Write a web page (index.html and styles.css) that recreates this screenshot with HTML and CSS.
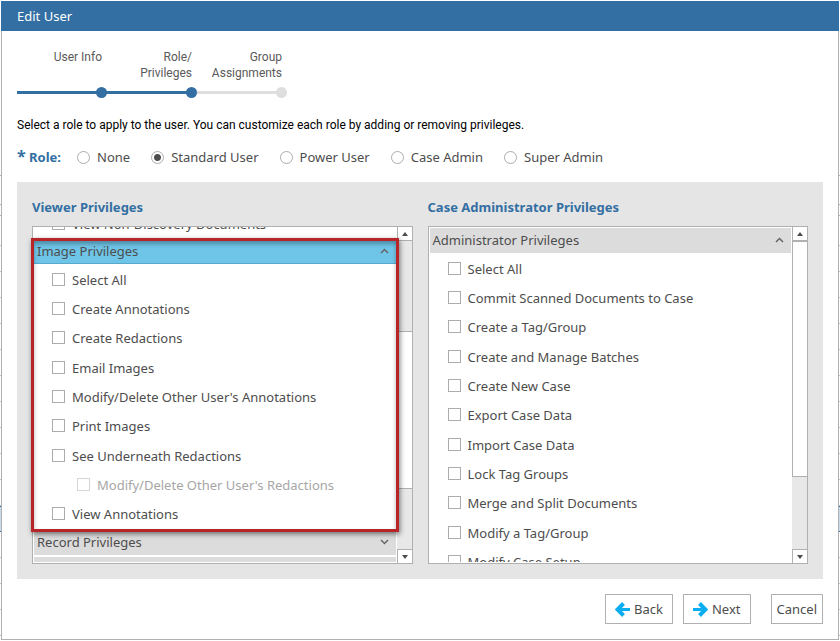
FILE: index.html
```html
<!DOCTYPE html>
<html lang="en">
<head>
<meta charset="utf-8">
<title>Edit User</title>
<link rel="stylesheet" href="styles.css">
</head>
<body>
<form class="window">
  <h1 class="titlebar">Edit User</h1>
  <main class="content">
    <ol class="steps">
      <li class="step done">User Info</li>
      <li class="step done">Role/<br>Privileges</li>
      <li class="step">Group<br>Assignments</li>
    </ol>
    <p class="intro">Select a role to apply to the user. You can customize each role by adding or removing privileges.</p>
    <div class="roles" role="radiogroup" aria-labelledby="role-title">
      <span class="roles-title" id="role-title"><span class="star">*</span> Role:</span>
      <label class="role"><input type="radio" name="role">None</label>
      <label class="role"><input type="radio" name="role" checked>Standard User</label>
      <label class="role"><input type="radio" name="role">Power User</label>
      <label class="role"><input type="radio" name="role">Case Admin</label>
      <label class="role"><input type="radio" name="role">Super Admin</label>
    </div>
    <div class="panel">
      <section class="column">
        <h2>Viewer Privileges</h2>
        <div class="listbox">
          <div class="view scrolled">
            <ul class="privileges">
              <li><label><input type="checkbox">View Non-Discovery Documents</label></li>
            </ul>
            <button type="button" class="group active">Image Privileges<svg class="chevron" viewBox="0 0 9 6"><path d="M1 5 4.500 1.500 8 5"/></svg></button>
            <ul class="privileges">
              <li><label><input type="checkbox">Select All</label></li>
              <li><label><input type="checkbox">Create Annotations</label></li>
              <li><label><input type="checkbox">Create Redactions</label></li>
              <li><label><input type="checkbox">Email Images</label></li>
              <li><label><input type="checkbox">Modify/Delete Other User's Annotations</label></li>
              <li><label><input type="checkbox">Print Images</label></li>
              <li><label><input type="checkbox">See Underneath Redactions</label></li>
              <li class="nested"><label><input type="checkbox" disabled>Modify/Delete Other User's Redactions</label></li>
              <li><label><input type="checkbox">View Annotations</label></li>
            </ul>
            <button type="button" class="group">Record Privileges<svg class="chevron" viewBox="0 0 9 6"><path d="M1 1 4.500 4.500 8 1"/></svg></button>
            <div class="group"></div>
          </div>
          <div class="scrollbar">
            <button type="button" class="arrow" aria-label="Scroll up"><svg viewBox="0 0 6 4"><path d="M3 0 6 4H0z"/></svg></button>
            <div class="track middle"><div class="thumb"></div></div>
            <button type="button" class="arrow down" aria-label="Scroll down"><svg viewBox="0 0 6 4"><path d="M0 0H6L3 4z"/></svg></button>
          </div>
          <div class="callout"></div>
        </div>
      </section>
      <section class="column">
        <h2>Case Administrator Privileges</h2>
        <div class="listbox">
          <div class="view">
            <button type="button" class="group">Administrator Privileges<svg class="chevron" viewBox="0 0 9 6"><path d="M1 5 4.500 1.500 8 5"/></svg></button>
            <ul class="privileges">
              <li><label><input type="checkbox">Select All</label></li>
              <li><label><input type="checkbox">Commit Scanned Documents to Case</label></li>
              <li><label><input type="checkbox">Create a Tag/Group</label></li>
              <li><label><input type="checkbox">Create and Manage Batches</label></li>
              <li><label><input type="checkbox">Create New Case</label></li>
              <li><label><input type="checkbox">Export Case Data</label></li>
              <li><label><input type="checkbox">Import Case Data</label></li>
              <li><label><input type="checkbox">Lock Tag Groups</label></li>
              <li><label><input type="checkbox">Merge and Split Documents</label></li>
              <li><label><input type="checkbox">Modify a Tag/Group</label></li>
              <li><label><input type="checkbox">Modify Case Setup</label></li>
            </ul>
          </div>
          <div class="scrollbar">
            <button type="button" class="arrow" aria-label="Scroll up"><svg viewBox="0 0 6 4"><path d="M3 0 6 4H0z"/></svg></button>
            <div class="track top"><div class="thumb"></div></div>
            <button type="button" class="arrow down" aria-label="Scroll down"><svg viewBox="0 0 6 4"><path d="M0 0H6L3 4z"/></svg></button>
          </div>
        </div>
      </section>
    </div>
    <footer class="actions">
      <button type="button"><svg class="icon" viewBox="0 0 15 15"><path class="head" d="M8.500 1.500 2.500 7.500l6 6"/><path class="shaft" d="M3 7.500H15"/></svg>Back</button>
      <button type="button"><svg class="icon" viewBox="0 0 15 15"><path class="head" d="M6.500 1.500 12.500 7.500l-6 6"/><path class="shaft" d="M12 7.500H0"/></svg>Next</button>
      <button type="button" class="cancel">Cancel</button>
    </footer>
  </main>
</form>
</body>
</html>
```
FILE: styles.css
```css
* { box-sizing: border-box; }

body {
  margin: 0;
  height: 100vh;
  padding: 1px;
  overflow: hidden;
  font-family: "Noto Sans", "Open Sans", sans-serif;
  font-size: 13px;
  line-height: 18px;
  color: #4d4d4d;
  /* toolbar, selected row and rows of the grid that lies behind the dialog */
  background:
    linear-gradient(#fff 175px, #b0b0b0 175px 176px, #fff 176px 204px, #b0b0b0 204px 205px, #fff 205px 215px, #b0b0b0 215px 216px, #fff 216px) 0 0 / 100% 245px no-repeat,
    linear-gradient(#2f6fa3 1px, #c9dbea 1px 25px, #2f6fa3 25px) 0 506px / 100% 26px no-repeat,
    linear-gradient(#c4c4c4 1px, #fff 1px) 0 245px / 100% 26px repeat-y;
}

ul, ol, h1, h2, p { margin: 0; padding: 0; list-style: none; }
button, input { font: inherit; color: inherit; margin: 0; }

.window {
  display: flex;
  flex-direction: column;
  height: 100%;
  background: #fff;
  border: 1px solid #b0b0b0;
  border-top: 0;
}

.titlebar {
  margin: 0 -1px;
  padding: 0 16px;
  background: #336fa2;
  color: #fff;
  font-size: 13px;
  font-weight: 400;
  line-height: 30px;
}

.content {
  flex: 1;
  min-height: 0;
  display: flex;
  flex-direction: column;
  padding: 18px 15px 15px;
}

.steps {
  display: grid;
  grid-template-columns: 85px 90px 90px;
  font-family: Roboto, "Noto Sans", sans-serif;
  font-size: 12px;
  line-height: 16px;
  text-align: right;
  color: #5a5a5a;
}

.step {
  position: relative;
  height: 49px;
  background: linear-gradient(#dedede, #dedede) 0 42px / 100% 3px no-repeat;
}

.step.done { background-image: linear-gradient(#336fa2, #336fa2); }

.step::after {
  content: "";
  position: absolute;
  z-index: 1;
  right: -5px;
  bottom: 0;
  width: 11px;
  height: 11px;
  border-radius: 50%;
  background: #dedede;
}

.step.done::after { background: #336fa2; }

.intro {
  margin-top: 18px;
  font-family: Roboto, "Noto Sans", sans-serif;
  font-size: 12px;
  color: #000;
}

.roles {
  display: flex;
  align-items: center;
  gap: 21px;
  margin-top: 14px;
}

.roles-title { margin-right: -5px; color: #336fa2; font-weight: 700; white-space: nowrap; }
.star { font-size: 16px; line-height: 16px; }
.role { display: flex; align-items: center; gap: 7px; white-space: nowrap; }

input {
  appearance: none;
  flex: none;
  width: 13px;
  height: 13px;
  border: 1px solid #acacac;
  background: #fff;
}

input[type="radio"] { border-radius: 50%; }
input[type="radio"]:checked { background: radial-gradient(circle, #4d4d4d 3px, #fff 4px); }

.panel {
  flex: 1;
  min-height: 0;
  display: grid;
  grid-template-columns: 1fr 1fr;
  gap: 15px;
  margin-top: 16px;
  padding: 16px 15px 15px;
  background: #e5e5e5;
}

.column { display: flex; flex-direction: column; min-width: 0; min-height: 0; }

h2 { margin-bottom: 10px; color: #336fa2; font-size: 13px; font-weight: 700; }

.listbox {
  position: relative;
  flex: 1;
  min-height: 0;
  display: flex;
  border: 1px solid #b0b0b0;
  background: #fff;
}

.view {
  flex: 1;
  min-width: 0;
  padding: 0 1px 1px;
  overflow: hidden;
  border-bottom: 1px solid #fff;
}

.scrolled > :first-child { margin-top: -18px; }

.group {
  display: flex;
  align-items: center;
  justify-content: space-between;
  width: 100%;
  height: 26px;
  margin: 0 0 1px;
  padding: 0 7px 0 3px;
  border: solid #dcdcdc;
  border-width: 1px 0;
  border-top-color: #fff;
  background: #dcdcdc;
}

.group.active { background: #6fc5e8; border-bottom-color: #5aa9cc; }

.chevron { width: 9px; height: 6px; fill: none; stroke: #666; stroke-width: 1.5; }

.privileges li { height: 29px; padding-left: 18px; }
.privileges li:nth-child(3n) { height: 30px; }
.privileges .nested { padding-left: 43px; color: #a6a6a6; }
.nested input { border-color: #d6d6d6; }
.privileges label { display: inline-flex; align-items: center; gap: 7px; height: 29px; white-space: nowrap; }

.scrollbar { flex: none; display: flex; flex-direction: column; width: 15px; background: #e8e8e8; }

.arrow {
  display: grid;
  place-items: center;
  height: 14px;
  padding: 0;
  border: solid #b0b0b0;
  border-width: 0 0 1px 1px;
  background: #fff;
}

.arrow.down { border-width: 1px 0 0 1px; }
.arrow svg { width: 6px; height: 4px; fill: #4d4d4d; }

.track { flex: 1; display: grid; }
.track.middle { grid-template-rows: 90fr 158fr 60fr; }
.track.top { grid-template-rows: 0 236fr 72fr; }
.thumb { grid-row: 2; border: 1px solid #b0b0b0; border-right: 0; background: #fff; }

/* frame that points out the image privileges */
.callout {
  position: absolute;
  top: 11px;
  left: -2px;
  right: 13px;
  height: 294px;
  border: 3px solid #b72528;
  box-shadow: 1px 2px 5px rgba(0, 0, 0, .5), inset 0 3px 4px rgba(0, 0, 0, .3);
  pointer-events: none;
}

.actions { display: flex; justify-content: flex-end; gap: 10px; margin-top: 15px; }

.actions button {
  display: flex;
  align-items: center;
  gap: 4px;
  height: 30px;
  padding: 0 9px;
  border: 1px solid #b0b0b0;
  background: #fff;
}

.actions .cancel { margin-left: 10px; padding: 0 5px; }
.icon { width: 15px; height: 15px; fill: none; stroke: #0aaef0; }
.head { stroke-width: 4; }
.shaft { stroke-width: 3; }
```
